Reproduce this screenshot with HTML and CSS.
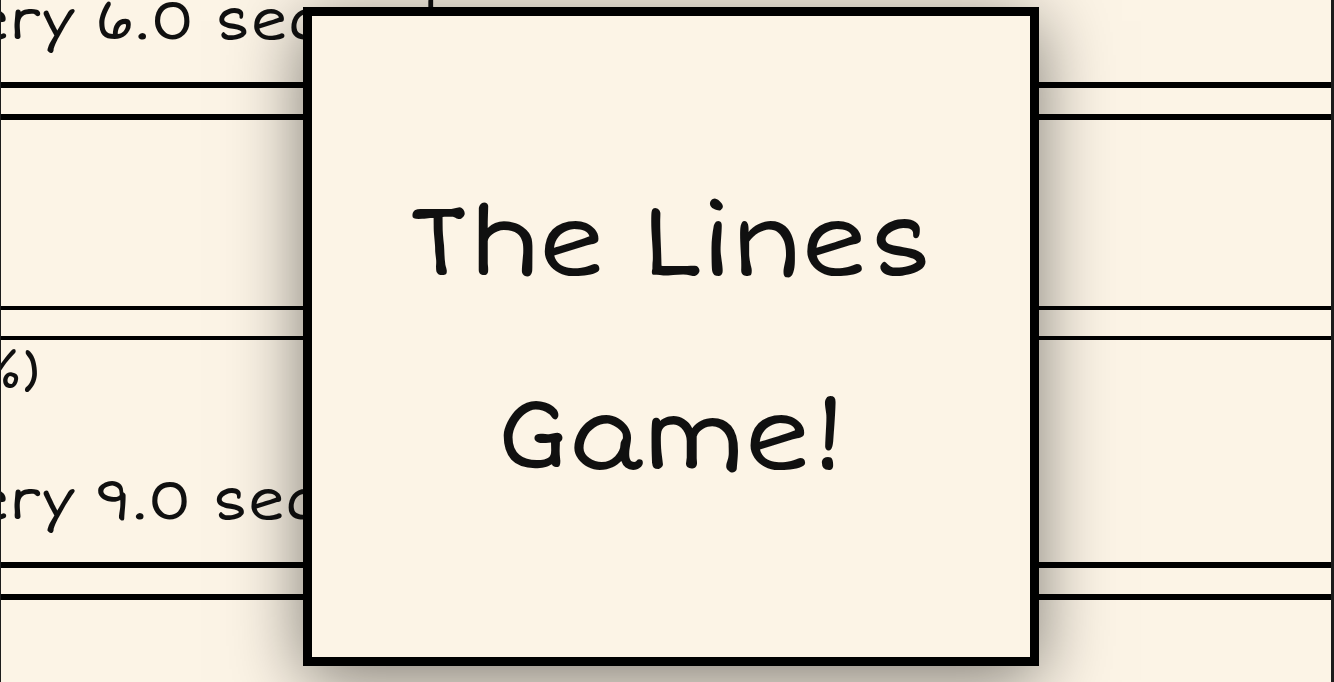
FILE: index.html
```
<!DOCTYPE html>
<html lang="en">
<head>
  <meta charset="utf-8">
  <meta name="viewport" content="width=device-width, initial-scale=1">
  <title>The Lines Game!</title>
  <link rel="stylesheet" href="styles.css">
</head>
<body>
  <main class="board">
    <section class="card card-heavy">
      <p class="line">ery 6.0 seconds</p>
    </section>
    <section class="card card-empty"></section>
    <section class="card card-lines">
      <p class="line line-percent">%)</p>
      <p class="line">ery 9.0 seconds</p>
    </section>
    <section class="card card-last"></section>
  </main>
  <div class="overlay">
    <div class="dialog" role="dialog" aria-labelledby="dialog-title">
      <h1 class="dialog-title" id="dialog-title">The Lines Game!</h1>
    </div>
  </div>
</body>
</html>
```

FILE: styles.css
```
* {
  box-sizing: border-box;
}

body {
  margin: 0;
  height: 100vh;
  overflow: hidden;
  background: #fcf4e6;
  color: #101010;
  font-family: "Short Stack", "DejaVu Sans", sans-serif;
}

.board {
  display: flex;
  flex-direction: column;
  gap: 26px;
  height: 100vh;
  overflow: hidden;
  border-left: 1px solid #1c1c1c;
  border-right: 3px solid #1c1c1c;
}

.card {
  flex: none;
  border: 0 solid #000;
}

.card-heavy {
  margin-top: -6px;
  padding-bottom: 32px;
  border-bottom-width: 6px;
}

.card-empty {
  min-height: 196px;
  border-top-width: 6px;
  border-bottom-width: 4px;
}

.card-lines {
  display: flex;
  flex-direction: column;
  gap: 74px;
  padding: 4px 0 32px;
  border-top-width: 4px;
  border-bottom-width: 6px;
}

.card-last {
  flex: 1 0 auto;
  border-top-width: 6px;
}

.line {
  margin: 0 0 0 -28px;
  font-size: 56px;
  line-height: 56px;
  white-space: nowrap;
}

.line-percent {
  margin-left: -24px;
  font-size: 51px;
}

.overlay {
  position: absolute;
  inset: 7px 0 16px 8px;
  display: flex;
  justify-content: center;
}

.dialog {
  display: flex;
  align-items: center;
  justify-content: center;
  width: 736px;
  max-width: 100%;
  padding-top: 6px;
  border: 9px solid #000;
  background: #fcf4e6;
  box-shadow: 0 14px 68px rgba(0, 0, 0, 0.5);
}

.dialog-title {
  margin: 0;
  font-size: 101px;
  font-weight: 400;
  line-height: 194px;
  text-align: center;
}
```
